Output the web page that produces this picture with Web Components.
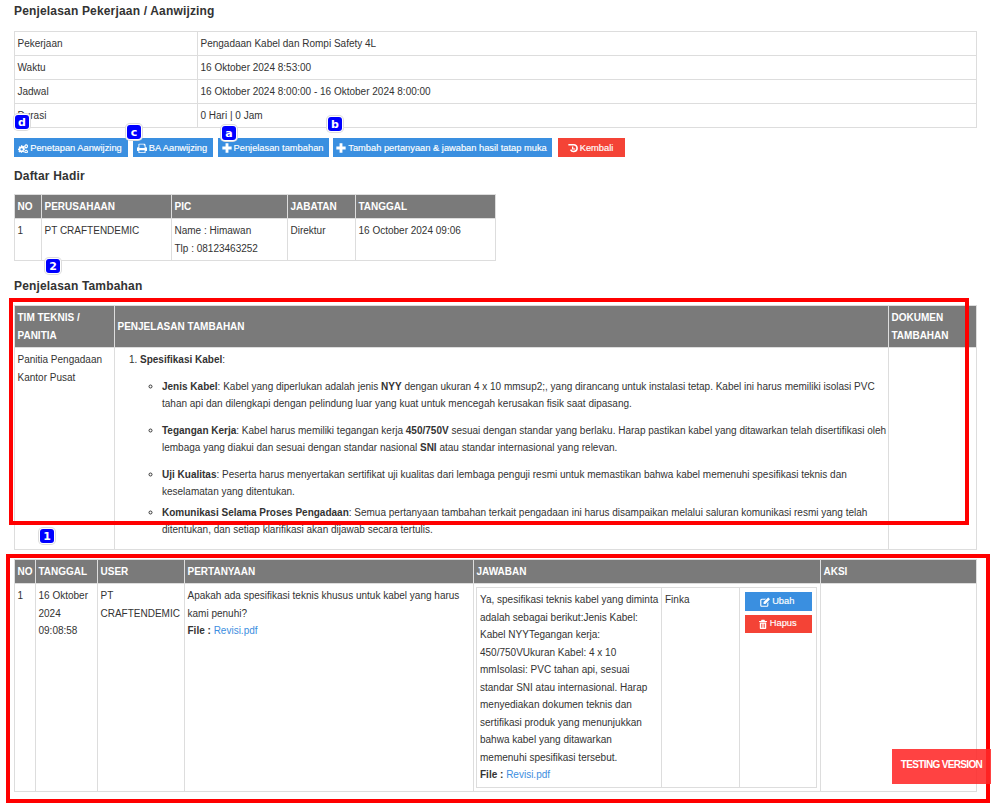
<!DOCTYPE html>
<html lang="id">
<head>
<meta charset="utf-8">
<title>Penjelasan Pekerjaan / Aanwijzing</title>
<style>
  html, body { margin: 0; padding: 0; background: #fff; overflow: hidden; }
  body { font-family: "Liberation Sans", Arial, sans-serif; font-size: 10px; color: #333; }
</style>
</head>
<body>
<aanwijzing-page></aanwijzing-page>

<script>
const TABLE_CSS = `
  table { border-collapse: collapse; table-layout: fixed; font-size: 10px; line-height: 17.5px; color: #333; }
  th, td { border: 1px solid #ddd; padding: 3px 2.5px; text-align: left; vertical-align: top; overflow-wrap: break-word; }
  th { background: #7a7a7a; color: #fff; font-weight: bold; vertical-align: middle; }
  a { color: #3c8ee0; text-decoration: none; }
`

const ICONS = {
  cogs: '<path fill-rule="evenodd" d="M4.200 3h1.800l.3 1.200.9.400 1.100-.6 1.200 1.200-.6 1.100.4.9L9.500 8v1.800l-1.200.3-.4.9.6 1.100-1.200 1.200-1.100-.6-.9.4-.3 1.200H4.200l-.3-1.200-.9-.4-1.100.6-1.200-1.200.6-1.100-.4-.9L0 9.800V8l1.200-.3.4-.9-.6-1.100 1.200-1.200 1.100.6.900-.4zM5.100 7.200a1.700 1.700 0 1 0 0 3.400 1.700 1.700 0 0 0 0-3.400z"/><path fill-rule="evenodd" d="M11.300 1l.5 1 1-.2.400 1 .9.400-.4 1 .6.800-.8.600.1 1.100-1 .2-.5.900-1-.4-.9.400-.5-.9-.6-.2.200-1-.8-.7.600-.8-.2-1 1-.3.500-.9zM11.500 3.400a1.100 1.100 0 1 0 0 2.200 1.100 1.100 0 0 0 0-2.200z"/><path fill-rule="evenodd" d="M11.500 9l.5.800 1-.1.300 1 .8.500-.4.900.4.900-.8.500-.3 1-1-.1-.5.800-.8-.8-1 .1-.2-1-.8-.5.300-.9-.3-.9.800-.5.200-1 1 .1zM11.300 10.900a1 1 0 1 0 0 2 1 1 0 0 0 0-2z"/>',
  print: '<path fill-rule="evenodd" d="M3.500 1h7.200l1.300 1.300V6h.6c.8 0 1.400.6 1.400 1.400v3.400c0 .3-.2.5-.5.5H12V14H2v-2.700H.5c-.3 0-.5-.2-.5-.5V7.400C0 6.600.6 6 1.400 6H2V1.500zM3.300 2.200V7h7.400V3.500H9.500V2.200zM3.300 10v2.800h7.400V10z"/>',
  plus: '<path d="M5 .5h4V5h4.500v4H9v4.500H5V9H.5V5H5z"/>',
  undo: '<path d="M.5 2.500H8a4.700 4.700 0 1 1-4.300 6.700" fill="none" stroke="#fff" stroke-width="2.200"/><path d="M6.500 5v3.400H10" fill="none" stroke="#fff" stroke-width="1.700"/>',
  edit: '<path fill-rule="evenodd" d="M2.500 2.500H8.500L7 4H2.800c-.5 0-.9.400-.9.900v6.500c0 .5.400.9.900.9h6.500c.5 0 .9-.4.900-.9V8.600l1.500-1.500v4.300c0 1.300-1 2.300-2.200 2.300H2.500C1.200 13.700.300 12.700.300 11.400V4.800C.300 3.500 1.200 2.500 2.500 2.500z"/><path d="M11.500 .6l2.600 2.600-6.500 6.500H5V7.100z"/>',
  trash: '<path fill-rule="evenodd" d="M5 1h4l.8 1.700H12.500V4.200H1.500V2.700h2.700zM2.500 5h9v7.500c0 .8-.6 1.500-1.300 1.500H3.800c-.7 0-1.300-.7-1.300-1.500zM4.300 6.500v5.800h1V6.500zM6.500 6.500v5.800h1V6.500zM8.700 6.500v5.800h1V6.500z"/>',
}

class SectionTitle extends HTMLElement {
  constructor() {
    super()
    this.attachShadow({ mode: 'open' }).innerHTML = `
      <style>
        :host {
          display: block;
          font-size: 12px;
          font-weight: bold;
          line-height: 20px;
          letter-spacing: .17px;
          color: #333;
        }
      </style>
      <slot></slot>`
  }
}

class ActionButton extends HTMLElement {
  constructor() {
    super()
    const icon = ICONS[this.getAttribute('icon')] || ''
    this.attachShadow({ mode: 'open' }).innerHTML = `
      <style>
        :host {
          display: flex;
          align-items: center;
          justify-content: center;
          gap: 2px;
          box-sizing: border-box;
          height: 19px;
          padding-right: 2px;
          background: #3a8fe0;
          color: #fff;
          font-size: 9.3px;
          white-space: nowrap;
          -webkit-text-stroke: .15px #fff;
        }
        :host([variant="danger"]) { background: #f44336; }
        svg { width: 10px; height: 10px; fill: #fff; flex: none; }
      </style>
      <svg viewBox="0 0 14 14">${icon}</svg><span><slot></slot></span>`
  }
}

class NumberBadge extends HTMLElement {
  constructor() {
    super()
    this.attachShadow({ mode: 'open' }).innerHTML = `
      <style>
        :host {
          position: absolute;
          display: flex;
          align-items: center;
          justify-content: center;
          box-sizing: border-box;
          width: 14px;
          height: 14px;
          background: #0000ff;
          border-radius: 3px;
          box-shadow: 0 0 0 1px #fff, 0 0 0 2px #dcdcdc;
          color: #fff;
          font: bold 11px "DejaVu Sans", sans-serif;
          z-index: 3;
        }
      </style>
      <slot></slot>`
  }
}

class RedFrame extends HTMLElement {
  constructor() {
    super()
    this.attachShadow({ mode: 'open' }).innerHTML = `
      <style>
        :host {
          position: absolute;
          box-sizing: border-box;
          border: 4px solid #f00;
          pointer-events: none;
          z-index: 2;
        }
      </style>`
  }
}

class TestingFlag extends HTMLElement {
  constructor() {
    super()
    this.attachShadow({ mode: 'open' }).innerHTML = `
      <style>
        :host {
          position: absolute;
          left: 892px;
          top: 749px;
          box-sizing: border-box;
          width: 99px;
          height: 35px;
          padding-bottom: 4px;
          display: flex;
          align-items: center;
          justify-content: center;
          background: rgba(255, 40, 40, .88);
          color: #fff;
          font-size: 10px;
          font-weight: bold;
          letter-spacing: -.65px;
          z-index: 4;
        }
      </style>
      <slot></slot>`
  }
}

class InfoTable extends HTMLElement {
  constructor() {
    super()
    const rows = [
      ['Pekerjaan', 'Pengadaan Kabel dan Rompi Safety 4L'],
      ['Waktu', '16 Oktober 2024 8:53:00'],
      ['Jadwal', '16 Oktober 2024 8:00:00 - 16 Oktober 2024 8:00:00'],
      ['Durasi', '0 Hari | 0 Jam'],
    ]
    this.attachShadow({ mode: 'open' }).innerHTML = `
      <style>
        ${TABLE_CSS}
        :host { display: block; }
        table { width: 963px; }
        td { height: 17px; line-height: 17px; }
      </style>
      <table>
        <colgroup><col style="width:183px"><col></colgroup>
        ${rows.map(r => `<tr><td>${r[0]}</td><td>${r[1]}</td></tr>`).join('')}
      </table>`
  }
}

class AttendanceTable extends HTMLElement {
  constructor() {
    super()
    this.attachShadow({ mode: 'open' }).innerHTML = `
      <style>
        ${TABLE_CSS}
        :host { display: block; }
        table { width: 482px; }
        th { height: 17px; line-height: 17px; }
      </style>
      <table>
        <colgroup>
          <col style="width:27px"><col style="width:130px"><col style="width:116px"><col style="width:68px"><col>
        </colgroup>
        <tr><th>NO</th><th>PERUSAHAAN</th><th>PIC</th><th>JABATAN</th><th>TANGGAL</th></tr>
        <tr>
          <td>1</td>
          <td>PT CRAFTENDEMIC</td>
          <td>Name : Himawan<br>Tlp : 08123463252</td>
          <td>Direktur</td>
          <td>16 October 2024 09:06</td>
        </tr>
      </table>`
  }
}

class ExtraTable extends HTMLElement {
  constructor() {
    super()
    this.attachShadow({ mode: 'open' }).innerHTML = `
      <style>
        ${TABLE_CSS}
        :host { display: block; }
        table { width: 963px; }
        th { height: 35px; }
        td.body { padding-right: 0; }
        ol { margin: 0; padding-left: 22.5px; }
        ul { margin: 9px 0 0; padding-left: 22px; list-style: circle; }
        li li { margin-bottom: 9px; }
        li li:nth-child(3) { margin-bottom: 3px; }
        li li:last-child { margin-bottom: 7.5px; }
      </style>
      <table>
        <colgroup><col style="width:100px"><col><col style="width:88px"></colgroup>
        <tr>
          <th>TIM TEKNIS / PANITIA</th>
          <th>PENJELASAN TAMBAHAN</th>
          <th>DOKUMEN TAMBAHAN</th>
        </tr>
        <tr>
          <td>Panitia Pengadaan Kantor Pusat</td>
          <td class="body">
            <ol>
              <li>
                <b>Spesifikasi Kabel</b>:
                <ul>
                  <li><b>Jenis Kabel</b>: Kabel yang diperlukan adalah jenis <b>NYY</b> dengan ukuran 4 x 10 mmsup2;, yang dirancang untuk instalasi tetap. Kabel ini harus memiliki isolasi PVC tahan api dan dilengkapi dengan pelindung luar yang kuat untuk mencegah kerusakan fisik saat dipasang.</li>
                  <li><b>Tegangan Kerja</b>: Kabel harus memiliki tegangan kerja <b>450/750V</b> sesuai dengan standar yang berlaku. Harap pastikan kabel yang ditawarkan telah disertifikasi oleh lembaga yang diakui dan sesuai dengan standar nasional <b>SNI</b> atau standar internasional yang relevan.</li>
                  <li><b>Uji Kualitas</b>: Peserta harus menyertakan sertifikat uji kualitas dari lembaga penguji resmi untuk memastikan bahwa kabel memenuhi spesifikasi teknis dan keselamatan yang ditentukan.</li>
                  <li><b>Komunikasi Selama Proses Pengadaan</b>: Semua pertanyaan tambahan terkait pengadaan ini harus disampaikan melalui saluran komunikasi resmi yang telah ditentukan, dan setiap klarifikasi akan dijawab secara tertulis.</li>
                </ul>
              </li>
            </ol>
          </td>
          <td></td>
        </tr>
      </table>`
  }
}

class QuestionTable extends HTMLElement {
  constructor() {
    super()
    this.attachShadow({ mode: 'open' }).innerHTML = `
      <style>
        ${TABLE_CSS}
        :host { display: block; }
        table.outer { width: 963px; }
        table.outer > tbody > tr:first-child > th { height: 17px; line-height: 17px; }
        table.answer { width: 341px; }
        table.answer td { padding-left: 3px; }
        td.wrap { padding: 3px 2px; }
        .stack { display: flex; flex-direction: column; gap: 4px; margin: 1px 2px 0 2px; }
        .stack action-button:last-child { height: 18px; }
        b.file { color: #333; }
      </style>
      <table class="outer">
        <colgroup>
          <col style="width:21px"><col style="width:62px"><col style="width:87px"><col style="width:289px"><col style="width:347px"><col>
        </colgroup>
        <tbody>
        <tr>
          <th>NO</th><th>TANGGAL</th><th>USER</th><th>PERTANYAAN</th><th>JAWABAN</th><th>AKSI</th>
        </tr>
        <tr>
          <td>1</td>
          <td>16 Oktober 2024 09:08:58</td>
          <td>PT CRAFTENDEMIC</td>
          <td>
            Apakah ada spesifikasi teknis khusus untuk kabel yang harus kami penuhi?<br>
            <b class="file">File :</b> <a href="#">Revisi.pdf</a>
          </td>
          <td class="wrap">
            <table class="answer">
              <colgroup><col style="width:185px"><col style="width:78px"><col></colgroup>
              <tr>
                <td>
                  Ya, spesifikasi teknis kabel yang diminta adalah sebagai berikut:Jenis Kabel: Kabel NYYTegangan kerja: 450/750VUkuran Kabel: 4 x 10 mmIsolasi: PVC tahan api, sesuai standar SNI atau internasional. Harap menyediakan dokumen teknis dan sertifikasi produk yang menunjukkan bahwa kabel yang ditawarkan memenuhi spesifikasi tersebut.<br>
                  <b class="file">File :</b> <a href="#">Revisi.pdf</a>
                </td>
                <td>Finka</td>
                <td>
                  <div class="stack">
                    <action-button icon="edit">Ubah</action-button>
                    <action-button icon="trash" variant="danger">Hapus</action-button>
                  </div>
                </td>
              </tr>
            </table>
          </td>
          <td></td>
        </tr>
        </tbody>
      </table>`
  }
}

class AanwijzingPage extends HTMLElement {
  constructor() {
    super()
    this.attachShadow({ mode: 'open' }).innerHTML = `
      <style>
        :host { display: block; position: relative; box-sizing: border-box; width: 991px; height: 803px; padding: 1px 14px 0; overflow: hidden; }
        .t1 { margin-bottom: 10px; }
        .t2 { margin: 9px 0 8px; }
        .t3 { margin: 15px 0 9px; }
        .actions { display: flex; margin-top: 10px; }
        .actions action-button:nth-child(1) { width: 114px; margin-right: 5px; }
        .actions action-button:nth-child(2) { width: 80px; margin-right: 5px; }
        .actions action-button:nth-child(3) { width: 111px; margin-right: 4px; }
        .actions action-button:nth-child(4) { width: 219px; margin-right: 6px; }
        .actions action-button:nth-child(5) { width: 67px; }
        question-table { margin-top: 9px; }
      </style>
      <section-title class="t1">Penjelasan Pekerjaan / Aanwijzing</section-title>
      <info-table></info-table>
      <div class="actions">
        <action-button icon="cogs">Penetapan Aanwijzing</action-button>
        <action-button icon="print">BA Aanwijzing</action-button>
        <action-button icon="plus">Penjelasan tambahan</action-button>
        <action-button icon="plus">Tambah pertanyaan &amp; jawaban hasil tatap muka</action-button>
        <action-button icon="undo" variant="danger">Kembali</action-button>
      </div>
      <section-title class="t2">Daftar Hadir</section-title>
      <attendance-table></attendance-table>
      <section-title class="t3">Penjelasan Tambahan</section-title>
      <extra-table></extra-table>
      <question-table></question-table>

      <red-frame style="left:9px;top:298px;width:960px;height:227px"></red-frame>
      <red-frame style="left:6px;top:554px;width:984px;height:249px"></red-frame>
      <number-badge style="left:15px;top:115px">d</number-badge>
      <number-badge style="left:127px;top:125px">c</number-badge>
      <number-badge style="left:222px;top:126px">a</number-badge>
      <number-badge style="left:328px;top:117px">b</number-badge>
      <number-badge style="left:46px;top:259px">2</number-badge>
      <number-badge style="left:40px;top:529px">1</number-badge>
      <testing-flag>TESTING VERSION</testing-flag>`
  }
}

customElements.define('section-title', SectionTitle)
customElements.define('action-button', ActionButton)
customElements.define('number-badge', NumberBadge)
customElements.define('red-frame', RedFrame)
customElements.define('testing-flag', TestingFlag)
customElements.define('info-table', InfoTable)
customElements.define('attendance-table', AttendanceTable)
customElements.define('extra-table', ExtraTable)
customElements.define('question-table', QuestionTable)
customElements.define('aanwijzing-page', AanwijzingPage)
</script>
</body>
</html>
